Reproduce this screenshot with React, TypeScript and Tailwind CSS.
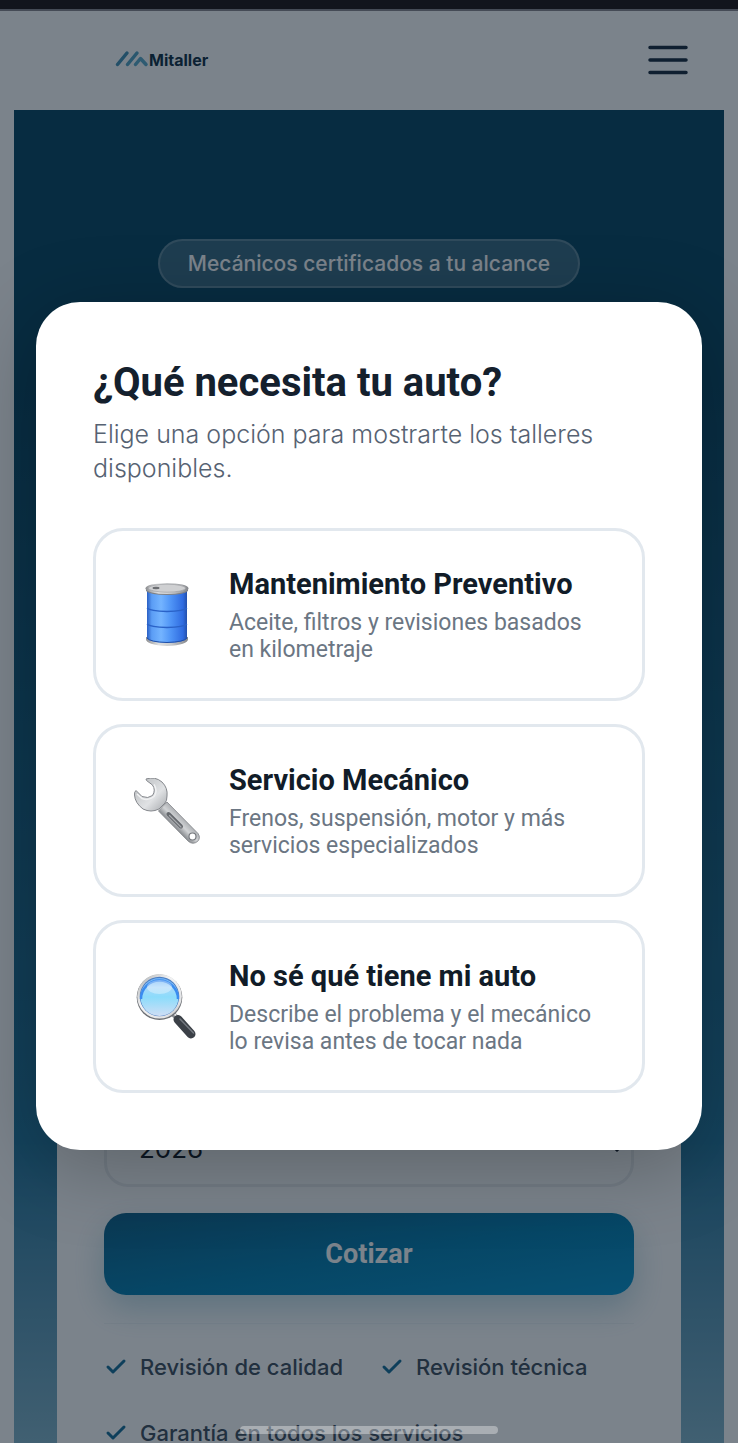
import { useState } from "react"
import { Check, ChevronDown } from "lucide-react"

function LogoMark() {
  return (
    <svg width="34" height="20" viewBox="0 0 34 20" fill="none" strokeLinecap="round">
      <path d="M2.500 14.500 L12 3" stroke="#3f8fb2" strokeWidth="3.500" />
      <path d="M12.500 14.500 L22 3" stroke="#4f9fc0" strokeWidth="3.500" />
      <path d="M20.500 14.500 L25.500 8.500 L31 14.500" stroke="#58a8c8" strokeWidth="3.500" strokeLinejoin="round" />
    </svg>
  )
}

function BarrelIcon() {
  return (
    <svg width="66" height="66" viewBox="0 0 66 66" aria-hidden="true">
      <defs>
        <linearGradient id="barrel-body" x1="0" x2="1">
          <stop offset="0" stopColor="#2a5fc4" />
          <stop offset="0.12" stopColor="#5b9df5" />
          <stop offset="0.35" stopColor="#74b4ff" />
          <stop offset="0.6" stopColor="#4f94f6" />
          <stop offset="0.9" stopColor="#2f6be0" />
          <stop offset="1" stopColor="#2350ab" />
        </linearGradient>
        <linearGradient id="barrel-metal" x1="0" x2="1">
          <stop offset="0" stopColor="#8d8f92" />
          <stop offset="0.3" stopColor="#dfe0e1" />
          <stop offset="0.6" stopColor="#c9cbcd" />
          <stop offset="1" stopColor="#85878b" />
        </linearGradient>
      </defs>
      <path d="M12 57 Q12 63 33 64 Q54 63 54 57 V55 H12 Z" fill="url(#barrel-metal)" />
      <path d="M13 8 H53 V56 Q51 60.500 33 61 Q15 60.500 13 56 Z" fill="url(#barrel-body)" />
      <path d="M13 26 Q16 29 33 29.500 Q50 29 53 26" fill="none" stroke="#2a62c8" strokeWidth="1.300" />
      <path d="M13 42 Q16 45 33 45.500 Q50 45 53 42" fill="none" stroke="#2a62c8" strokeWidth="1.300" />
      <path d="M13 56 Q16 60 33 60.500 Q50 60 53 56" fill="none" stroke="#214ea5" strokeWidth="1" />
      <path d="M12 6 V9 Q16 13 33 13 Q50 13 54 9 V6 Z" fill="#808286" />
      <ellipse cx="33" cy="6.500" rx="21.500" ry="5.500" fill="url(#barrel-metal)" />
      <ellipse cx="33" cy="6.200" rx="18.500" ry="4" fill="#cfd0d2" stroke="#a0a2a6" strokeWidth="0.700" />
      <ellipse cx="22" cy="6" rx="3.500" ry="1.200" fill="#6c6e72" />
    </svg>
  )
}

function WrenchIcon() {
  return (
    <svg width="66" height="66" viewBox="0 0 66 66" aria-hidden="true">
      <defs>
        <linearGradient id="wrench-head" x1="0" y1="0" x2="1" y2="1">
          <stop offset="0" stopColor="#b5b8bb" />
          <stop offset="0.6" stopColor="#e0e2e4" />
          <stop offset="1" stopColor="#a3a6aa" />
        </linearGradient>
        <linearGradient id="wrench-handle" x1="0" y1="1" x2="1" y2="0">
          <stop offset="0.400" stopColor="#8e9195" />
          <stop offset="0.500" stopColor="#d2d4d6" />
          <stop offset="0.650" stopColor="#9fa2a6" />
        </linearGradient>
      </defs>
      <path
        d="M33 24 L64 55.500 Q67 60 63.500 63.500 Q59 67 54.500 63.500 L24.500 33 Z"
        fill="url(#wrench-handle)"
        stroke="#808388"
        strokeWidth="0.800"
      />
      <path d="M34.500 36 L47 48.500" stroke="#65686d" strokeWidth="4" strokeLinecap="round" />
      <path d="M35.500 37.500 L47 49" stroke="#a8abaf" strokeWidth="1.200" strokeLinecap="round" />
      <circle cx="58.500" cy="58.500" r="3.500" fill="#fff" stroke="#75787d" strokeWidth="1.200" />
      <path
        d="M12 1 Q21 -2 28 4 Q34 10 33 18 Q33 23 31 25 L25 31 Q17 35 9 31 Q1 25 .5 17 Q0 14 2 12.500 L8 18.500 Q14 21 18.500 17.500 Q22 12 18.500 7 L12.500 2.500 Z"
        fill="url(#wrench-head)"
        stroke="#85888d"
        strokeWidth="1"
        strokeLinejoin="round"
      />
      <path d="M3 16 L8 20.500 Q15 23 20 18.500 Q24 13 20 6.500" fill="none" stroke="#f1f2f3" strokeWidth="1.500" />
    </svg>
  )
}

function MagnifierIcon() {
  return (
    <svg width="66" height="66" viewBox="0 0 66 66" aria-hidden="true">
      <defs>
        <linearGradient id="lens" x1="0" y1="0" x2="0" y2="1">
          <stop offset="0" stopColor="#6fb2f5" />
          <stop offset="0.250" stopColor="#a9d8fb" />
          <stop offset="0.500" stopColor="#8bdcfb" />
          <stop offset="1" stopColor="#cfdef5" />
        </linearGradient>
        <linearGradient id="lens-rim" x1="0" y1="0" x2="1" y2="1">
          <stop offset="0" stopColor="#a5a8ab" />
          <stop offset="0.400" stopColor="#f2f3f4" />
          <stop offset="0.800" stopColor="#e2e3e5" />
          <stop offset="1" stopColor="#8b8e93" />
        </linearGradient>
      </defs>
      <path d="M37 38 L43 44" stroke="#8c8f94" strokeWidth="5" />
      <path d="M38 37.500 L43 42.500" stroke="#e7e8ea" strokeWidth="2" />
      <path d="M44 45.500 L57 60" stroke="#3b4047" strokeWidth="9" strokeLinecap="round" />
      <path d="M46 45 L59.500 59" stroke="#747980" strokeWidth="1.500" strokeLinecap="round" />
      <circle cx="25.500" cy="23.300" r="22.800" fill="#6c6f74" />
      <circle cx="25.500" cy="22.300" r="22.300" fill="url(#lens-rim)" />
      <circle cx="25.500" cy="22.500" r="19.800" fill="#4c7fc4" />
      <circle cx="25.500" cy="23" r="19" fill="url(#lens)" />
      <path d="M7 25 A18.500 18.500 0 0 1 44 25" fill="none" stroke="#3a8cf0" strokeWidth="2.500" />
      <ellipse cx="25.500" cy="13" rx="12.500" ry="7" fill="#fff" opacity="0.350" />
    </svg>
  )
}

const options = [
  {
    id: "preventivo",
    title: "Mantenimiento Preventivo",
    text: "Aceite, filtros y revisiones basados en kilometraje",
    icon: <BarrelIcon />,
  },
  {
    id: "mecanico",
    title: "Servicio Mecánico",
    text: "Frenos, suspensión, motor y más servicios especializados",
    icon: <WrenchIcon />,
  },
  {
    id: "diagnostico",
    title: "No sé qué tiene mi auto",
    text: "Describe el problema y el mecánico lo revisa antes de tocar nada",
    icon: <MagnifierIcon />,
  },
]

const benefits = ["Revisión de calidad", "Revisión técnica", "Garantía en todos los servicios"]

export default function App() {
  const [year, setYear] = useState("2026")
  const [, setSelected] = useState<string | null>(null)

  return (
    <div className="flex h-dvh flex-col overflow-hidden bg-white font-['Inter',sans-serif]">
      <div className="h-[11px] shrink-0 border-b-2 border-[#454b56] bg-[#12151d]" />

      <div className="relative min-h-0 flex-1 overflow-hidden">
        <header className="flex h-[99px] items-center justify-between bg-white pr-[50px] pb-0.5 pl-[115px]">
          <a href="#" className="flex items-center text-base font-bold text-[#0b2a40]">
            <LogoMark />
            Mitaller
          </a>
          <button type="button" aria-label="Menú" className="text-[#14263a]">
            <svg width="40" height="30" viewBox="0 0 40 30" stroke="currentColor" strokeWidth="3.500" strokeLinecap="round">
              <path d="M2 2.500 H38 M2 15 H38 M2 27.500 H38" />
            </svg>
          </button>
        </header>

        <section className="mx-[14px] flex flex-col items-center bg-linear-to-b from-[#04425f] from-20% via-[#1f7299] via-75% to-[#8dbccf] to-100% px-[43px] pt-[129px]">
          <p className="flex h-[49px] items-center rounded-full border-2 border-white/20 bg-white/20 px-7 text-[21px] font-medium text-white">
            Mecánicos certificados a tu alcance
          </p>

          <div className="mt-[612px] w-full bg-white px-[47px] pt-[205px] pb-5">
            <div className="relative">
              <select
                aria-label="Año"
                value={year}
                onChange={(e) => setYear(e.target.value)}
                className="h-[82px] w-full appearance-none rounded-[24px] border-[3px] border-[#eceef0] bg-white px-8 pt-1 text-[26px] text-[#0f1420]"
              >
                <option>2026</option>
                <option>2025</option>
                <option>2024</option>
              </select>
              <ChevronDown size={22} className="pointer-events-none absolute top-8 right-[6px] text-[#0f1420]" />
            </div>

            <button
              type="button"
              className="mt-[26px] h-[82px] w-full rounded-[22px] bg-linear-to-br from-[#0a5c84] via-[#027aac] to-[#0492cc] font-['Roboto',sans-serif] text-[27px] font-bold text-white shadow-[0_14px_32px_rgba(2,106,148,0.25)]"
            >
              Cotizar
            </button>

            <ul className="mt-7 flex flex-wrap gap-x-[37px] border-t border-[#f4f6f8] pt-[10px] text-[22px] font-medium text-[#3c4a5a]">
              {benefits.map((b) => (
                <li key={b} className="flex h-[66px] items-center gap-3">
                  <Check size={24} strokeWidth={3} className="text-[#136b96]" />
                  {b}
                </li>
              ))}
            </ul>
          </div>
        </section>

        <div className="absolute inset-0 flex items-center justify-center bg-[#0c1a28]/54 px-9 pb-0.5 font-['Roboto',sans-serif]">
          <div
            role="dialog"
            aria-modal="true"
            aria-labelledby="dialog-title"
            className="w-full rounded-[44px] bg-white px-[57px] py-[57px] shadow-[0_16px_80px_rgba(0,0,0,0.25)]"
          >
            <h2 id="dialog-title" className="text-[40px] leading-[48px] font-bold text-[#14202d]">
              ¿Qué necesita tu auto?
            </h2>
            <p className="mt-[10px] font-['Inter',sans-serif] text-[25px] leading-[34px] font-light text-[#566272]">
              Elige una opción para mostrarte los talleres disponibles.
            </p>

            <div className="mt-[43px] flex flex-col gap-[23px]">
              {options.map((option) => (
                <button
                  key={option.id}
                  type="button"
                  onClick={() => setSelected(option.id)}
                  className="flex h-[173px] items-center gap-[29px] rounded-[30px] border-[3px] border-[#e2e8ee] bg-white px-[38px] text-left"
                >
                  <span className="shrink-0">{option.icon}</span>
                  <span className="flex flex-col gap-2">
                    <span className="text-[29px] leading-[34px] font-bold text-[#111c28]">{option.title}</span>
                    <span className="text-[23px] leading-[27px] text-[#6b7683]">{option.text}</span>
                  </span>
                </button>
              ))}
            </div>
          </div>
        </div>

        <div className="absolute bottom-[9px] left-1/2 h-2 w-[258px] -translate-x-1/2 rounded-full bg-white/35" />
      </div>
    </div>
  )
}
